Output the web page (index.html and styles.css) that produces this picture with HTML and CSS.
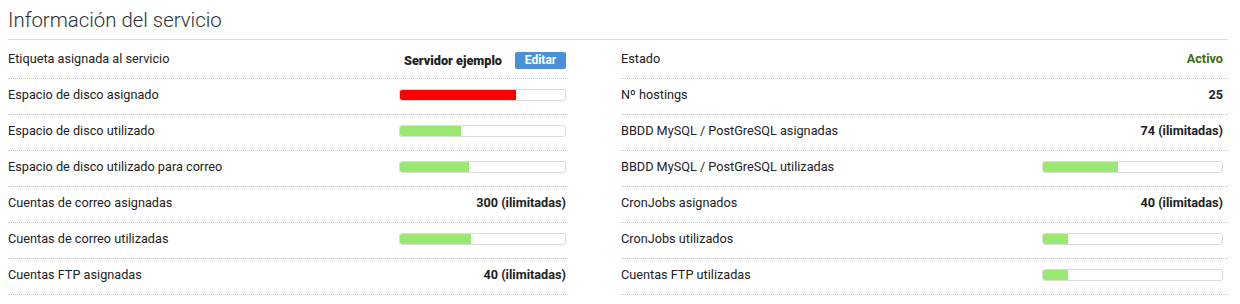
FILE: index.html
```html
<!DOCTYPE html>
<html lang="es">
<head>
<meta charset="utf-8">
<title>Información del servicio</title>
<link rel="stylesheet" href="styles.css">
</head>
<body>
<section class="panel">
  <h1 class="title">Información del servicio</h1>
  <div class="cols">
    <div class="col col-left">
      <div class="row first">
        <span class="label">Etiqueta asignada al servicio</span>
        <span class="value tag"><b>Servidor ejemplo</b><button class="btn">Editar</button></span>
      </div>
      <div class="row">
        <span class="label">Espacio de disco asignado</span>
        <div class="bar"><div class="fill red" style="width:70%"></div></div>
      </div>
      <div class="row">
        <span class="label">Espacio de disco utilizado</span>
        <div class="bar"><div class="fill" style="width:37%"></div></div>
      </div>
      <div class="row">
        <span class="label">Espacio de disco utilizado para correo</span>
        <div class="bar"><div class="fill" style="width:42%"></div></div>
      </div>
      <div class="row">
        <span class="label">Cuentas de correo asignadas</span>
        <span class="value">300 (ilimitadas)</span>
      </div>
      <div class="row">
        <span class="label">Cuentas de correo utilizadas</span>
        <div class="bar"><div class="fill" style="width:43%"></div></div>
      </div>
      <div class="row">
        <span class="label">Cuentas FTP asignadas</span>
        <span class="value">40 (ilimitadas)</span>
      </div>
    </div>
    <div class="col col-right">
      <div class="row first">
        <span class="label">Estado</span>
        <span class="value ok">Activo</span>
      </div>
      <div class="row">
        <span class="label">Nº hostings</span>
        <span class="value">25</span>
      </div>
      <div class="row">
        <span class="label">BBDD MySQL / PostGreSQL asignadas</span>
        <span class="value">74 (ilimitadas)</span>
      </div>
      <div class="row">
        <span class="label">BBDD MySQL / PostGreSQL utilizadas</span>
        <div class="bar"><div class="fill" style="width:42%"></div></div>
      </div>
      <div class="row">
        <span class="label">CronJobs asignados</span>
        <span class="value">40 (ilimitadas)</span>
      </div>
      <div class="row">
        <span class="label">CronJobs utilizados</span>
        <div class="bar"><div class="fill" style="width:14%"></div></div>
      </div>
      <div class="row">
        <span class="label">Cuentas FTP utilizadas</span>
        <div class="bar"><div class="fill" style="width:14%"></div></div>
      </div>
    </div>
  </div>
</section>
</body>
</html>
```
FILE: styles.css
```css
* { box-sizing: border-box; }
html, body { margin: 0; padding: 0; background: #fff; }
body {
  font-family: Roboto, "Liberation Sans", Arial, sans-serif;
  font-size: 12.7px;
  color: #222;
}
.panel { padding: 0 12px 0 8px; }
.title {
  margin: 0;
  padding: 7px 0 6px;
  font-size: 20.4px;
  line-height: 26px;
  font-weight: 300;
  color: #2b2f36;
  border-bottom: 1px solid #ddd;
}
.cols {
  display: grid;
  grid-template-columns: 560px 607px;
  column-gap: 53px;
}
.row {
  display: flex;
  align-items: center;
  justify-content: space-between;
  height: 36px;
  padding-bottom: 4px;
  border-bottom: 1px dotted #c4c4c4;
}
.col-left .row { padding-right: 2px; }
.col-right .row { padding-right: 5px; }
.row.first { height: 39px; padding-top: 2px; }
.label { white-space: nowrap; }
.value { font-weight: 700; white-space: nowrap; }
.value.ok { color: #3e6b10; }
.tag { display: flex; align-items: center; gap: 13px; padding-top: 5px; }
.btn {
  font-family: inherit;
  font-size: 12px;
  font-weight: 700;
  color: #fff;
  background: #4a90d6;
  border: 0;
  border-radius: 2px;
  height: 17px;
  width: 51px;
  padding: 0;
  line-height: 17px;
}
.bar {
  width: 167px;
  height: 12px;
  border: 1px solid #dcdcdc;
  border-radius: 3px;
  background: #fff;
  overflow: hidden;
}
.col-right .bar { width: 181px; }
.fill { height: 100%; background: #9ae872; }
.fill.red { background: #ff0000; }
```
